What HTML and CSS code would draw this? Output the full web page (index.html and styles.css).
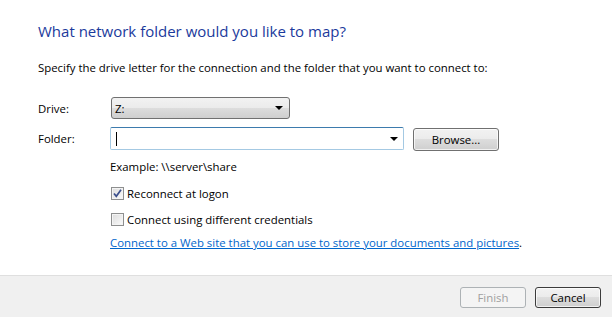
FILE: index.html
```html
<!DOCTYPE html>
<html lang="en">
<head>
  <meta charset="UTF-8" />
  <title>Map Network Drive</title>
  <link rel="stylesheet" href="styles.css">
</head>
<body>

  <div class="wizard">
    <!-- Contenido principal -->
    <main class="content">
      <h1 class="title">What network folder would you like to map?</h1>
      <p class="intro">Specify the drive letter for the connection and the folder that you want to connect to:</p>

      <div class="form">
        <div class="row">
          <span class="label">Drive:</span>
          <div class="combo drive">
            <span>Z:</span>
            <span class="arrow"></span>
          </div>
        </div>

        <div class="row folder-row">
          <span class="label">Folder:</span>
          <div class="edit-combo">
            <span class="caret"></span>
            <span class="arrow"></span>
          </div>
          <button class="btn browse">Browse...</button>
        </div>

        <div class="options">
          <div class="example">Example: \\server\share</div>
          <label class="check">
            <span class="box">
              <svg width="11" height="11" viewBox="0 0 11 11"><path d="M2 5.5 L4.3 8.3 L9 1.8" fill="none" stroke="#3b4f8c" stroke-width="1.7"/></svg>
            </span>
            Reconnect at logon
          </label>
          <label class="check">
            <span class="box"></span>
            Connect using different credentials
          </label>
          <div class="link-line"><a href="#" class="link">Connect to a Web site that you can use to store your documents and pictures</a>.</div>
        </div>
      </div>
    </main>

    <!-- Barra de botones -->
    <footer class="footer">
      <button class="btn disabled">Finish</button>
      <button class="btn default">Cancel</button>
    </footer>
  </div>

</body>
</html>
```

FILE: styles.css
```css
/* Asistente estilo Windows 7 */
body {
  margin: 0;
  background: #ffffff;
  font-family: 'Open Sans', 'Noto Sans', sans-serif;
  font-size: 11.4px;
  color: #000000;
}

.wizard {
  width: 612px;
  height: 317px;
  display: flex;
  flex-direction: column;
}

.content {
  flex: 1;
  padding: 20px 0 0 38px;
}

.title {
  margin: 0;
  font-size: 15px;
  font-weight: normal;
  line-height: 22px;
  color: #1b3a9c;
}

.intro {
  margin: 18px 0 0 0;
  line-height: 16px;
}

.form {
  margin-top: 21px;
}

.row {
  display: flex;
  align-items: center;
  height: 22px;
}

.label {
  width: 72px;
}

.folder-row {
  margin-top: 8px;
  height: 24px;
  align-items: flex-start;
}

.folder-row .label {
  line-height: 23px;
}

.combo {
  width: 168px;
  height: 20px;
  border: 1px solid #707070;
  border-radius: 3px;
  background: linear-gradient(#f2f2f2 0%, #ebebeb 50%, #dddddd 50%, #cfcfcf 100%);
  display: flex;
  align-items: center;
  justify-content: space-between;
  padding: 0 6px 0 3px;
  margin-left: 1px;
}

.arrow {
  width: 0;
  height: 0;
  border-left: 4px solid transparent;
  border-right: 4px solid transparent;
  border-top: 4px solid #000000;
}

.edit-combo {
  width: 282px;
  height: 21px;
  border: 1px solid #a4c9e3;
  border-top-color: #3d7bad;
  border-radius: 2px;
  display: flex;
  align-items: center;
  justify-content: space-between;
  padding: 0 5px 0 5px;
}

.caret {
  width: 1px;
  height: 14px;
  background: #000000;
}

.btn {
  font-family: 'Open Sans', 'Noto Sans', sans-serif;
  font-size: 11.4px;
  color: #000000;
  border: 1px solid #707070;
  border-radius: 3px;
  background: linear-gradient(#f2f2f2 0%, #ebebeb 50%, #dddddd 50%, #cfcfcf 100%);
  padding: 0;
  box-shadow: inset 0 0 0 1px rgba(255,255,255,0.7);
}

.browse {
  width: 86px;
  height: 23px;
  margin: 1px 0 0 9px;
}

.options {
  margin-left: 72px;
  margin-top: 8px;
  display: flex;
  flex-direction: column;
}

.example {
  line-height: 16px;
}

.check {
  display: flex;
  align-items: center;
  gap: 3px;
  height: 16px;
  margin-top: 10px;
}

.box {
  width: 11px;
  height: 11px;
  border: 1px solid #8e8f8f;
  background: linear-gradient(135deg, #dcdcdc, #fbfbfb);
  box-shadow: inset 0 0 0 1px #f4f4f4;
  display: flex;
  align-items: center;
  justify-content: center;
  margin-left: 1px;
}

.link-line {
  margin-top: 8px;
  line-height: 16px;
}

.link {
  color: #0066cc;
  text-decoration: underline;
}

.footer {
  height: 42px;
  background: #f0f0f0;
  border-top: 1px solid #dfdfdf;
  display: flex;
  justify-content: flex-end;
  align-items: flex-start;
  gap: 9px;
  padding: 11px 11px 0 0;
  box-sizing: border-box;
}

.footer .btn {
  width: 66px;
  height: 21px;
}

.btn.disabled {
  color: #a0a0a0;
  border-color: #adb2b5;
  background: #f4f4f4;
  box-shadow: none;
}

.btn.default {
  border-color: #3c3c3c;
}
```
